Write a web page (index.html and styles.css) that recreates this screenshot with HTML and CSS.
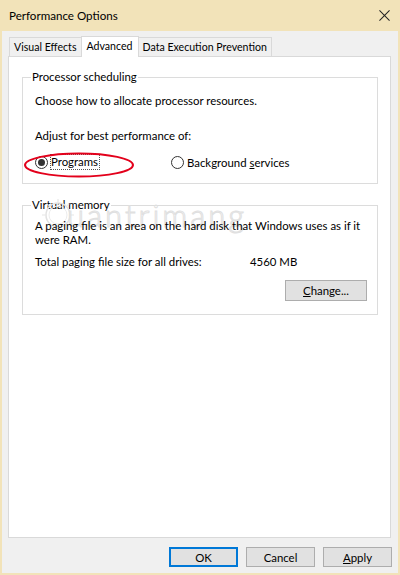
FILE: index.html
```html
<!DOCTYPE html>
<html>
<head>
<meta charset="utf-8">
<link rel="stylesheet" href="styles.css">
</head>
<body>
<div class="window">
  <div class="titlebar">
    <span class="title">Performance Options</span>
    <svg class="close" width="12" height="12" viewBox="0 0 12 12"><path d="M0.5 0.5 L11.5 11.5 M11.5 0.5 L0.5 11.5" stroke="#222" stroke-width="1.1" fill="none"/></svg>
  </div>
  <div class="tabs">
    <div class="tab">Visual Effects</div>
    <div class="tab active">Advanced</div>
    <div class="tab">Data Execution Prevention</div>
  </div>
  <div class="panel">
    <fieldset class="group g1">
      <legend>Processor scheduling</legend>
      <p class="text choose">Choose how to allocate processor resources.</p>
      <p class="text adjust">Adjust for best performance of:</p>
      <div class="radios">
        <div class="radio programs">
          <span class="dot checked"></span>
          <span class="focus"><u>P</u>rograms</span>
          <svg class="mark" width="112" height="26" viewBox="0 0 112 26"><ellipse cx="56" cy="13" rx="54" ry="11.5" fill="none" stroke="#e3001b" stroke-width="2"/></svg>
        </div>
        <div class="radio services">
          <span class="dot"></span>
          <span>Background <u>s</u>ervices</span>
        </div>
      </div>
    </fieldset>
    <fieldset class="group g2">
      <legend>Virtual memory</legend>
      <div class="watermark">
        <svg class="wm-logo" width="34" height="34" viewBox="0 0 34 34"><circle cx="17" cy="17" r="12" fill="none" stroke="#e2e2e2" stroke-width="1.5"/><circle cx="17" cy="17" r="9" fill="none" stroke="#ececec" stroke-width="1"/><path d="M17 1v3M17 30v3M1 17h3M30 17h3M5.7 5.7l2 2M26.3 26.3l2 2M5.7 28.3l2-2M26.3 7.7l2-2" stroke="#e6e6e6" stroke-width="1.2"/></svg>
        <span class="wm-text">uantrimang</span>
      </div>
      <p class="text paging">A paging file is an area on the hard disk that Windows uses as if it were RAM.</p>
      <div class="total">
        <span class="total-label">Total paging file size for all drives:</span>
        <span class="total-value">4560 MB</span>
      </div>
      <div class="change-row">
        <button class="btn change"><u>C</u>hange...</button>
      </div>
    </fieldset>
  </div>
  <div class="footer">
    <button class="btn ok">OK</button>
    <button class="btn">Cancel</button>
    <button class="btn"><u>A</u>pply</button>
  </div>
</div>
</body>
</html>
```
FILE: styles.css
```css
* { box-sizing: border-box; }
html, body { margin: 0; padding: 0; }
body {
  width: 400px;
  height: 575px;
  font-family: "Lato", "Noto Sans", sans-serif;
  font-size: 11.4px;
  color: #000;
  background: #f0f0f0;
}
.window {
  width: 400px;
  height: 575px;
  display: flex;
  flex-direction: column;
  background: #f0f0f0;
  border-left: 2px solid #f2e3b9;
  border-right: 2px solid #f2e3b9;
  border-bottom: 2px solid #f2e3b9;
}
.titlebar {
  height: 31px;
  flex: none;
  background: #f2e3b9;
  margin: 0 -2px;
  padding: 0 10px 0 9px;
  display: flex;
  align-items: center;
  justify-content: space-between;
}
.title { font-size: 11.6px; }
.close { width: 11px; height: 11px; margin-top: -1px; }

.tabs {
  flex: none;
  display: flex;
  align-items: flex-end;
  height: 25px;
  padding-left: 7px;
  position: relative;
  z-index: 1;
  font-size: 10.6px;
}
.tab {
  height: 19px;
  line-height: 18px;
  padding: 0 4px;
  border: 1px solid #d9d9d9;
  border-bottom: none;
  background: #f0f0f0;
}
.tab + .tab { margin-left: -1px; }
.tab.active {
  height: 21px;
  padding: 0 5px;
  background: #fff;
  margin-bottom: -1px;
  position: relative;
  z-index: 2;
}
.panel {
  flex: none;
  height: 482px;
  width: 383px;
  margin-left: 6px;
  background: #fff;
  border: 1px solid #d9d9d9;
  padding: 12px 0 0 13px;
}
.group {
  margin: 0;
  width: 356px;
  border: 1px solid #dcdcdc;
  padding: 0 12px;
  min-inline-size: 0;
  position: relative;
}
.group legend {
  padding: 0 1px;
  margin-left: -4px;
  line-height: 16px;
}
.text { margin: 0; line-height: 14px; }
.g1 { padding-bottom: 13px; }
.choose { margin-top: 9px; }
.adjust { margin-top: 21px; }
.radios {
  display: flex;
  margin-top: 11px;
  height: 16px;
  align-items: center;
}
.radio {
  display: flex;
  align-items: center;
  position: relative;
}
.programs { width: 136px; }
.dot {
  width: 13px;
  height: 13px;
  border: 1px solid #333;
  border-radius: 50%;
  margin-right: 3px;
  display: inline-flex;
  align-items: center;
  justify-content: center;
  background: #fff;
}
.dot.checked::after {
  content: "";
  width: 7px;
  height: 7px;
  border-radius: 50%;
  background: #333;
}
.focus {
  outline: 1px dotted #555;
  padding: 0 1px 0 0;
  line-height: 14px;
}
.focus u { text-decoration: none; }
.services u, .btn u { text-decoration: underline; }
.mark {
  position: absolute;
  left: -12px;
  top: -3px;
  pointer-events: none;
}

.g2 { margin-top: 13px; padding-bottom: 13px; }
.watermark {
  position: absolute;
  left: 18px;
  top: -17px;
  display: flex;
  align-items: center;
  pointer-events: none;
}
.wm-text {
  font-family: "Lato", sans-serif;
  font-size: 31px;
  font-weight: 300;
  letter-spacing: 3px;
  color: transparent;
  -webkit-text-stroke: 1px #e0e0e0;
  margin-left: -8px;
}
.paging { margin-top: 6px; position: relative; padding-right: 4px; }
.total {
  display: flex;
  margin-top: 8px;
  line-height: 14px;
}
.total-label { width: 215px; }
.change-row {
  display: flex;
  justify-content: flex-end;
  margin-top: 11px;
}
.btn {
  font-family: inherit;
  font-size: 11.4px;
  color: #000;
  background: #e1e1e1;
  border: 1px solid #adadad;
  border-radius: 0;
  padding: 0;
  margin: 0;
  height: 21px;
  width: 82px;
}
.change { margin-right: -2px; }
.footer {
  flex: none;
  display: flex;
  justify-content: flex-end;
  gap: 8px;
  padding: 9px 6px 0 0;
}
.footer .btn { width: 69px; height: 20px; }
.footer .ok { border: 1px solid #0078d7; box-shadow: inset 0 0 0 1px #0078d7; }
```
